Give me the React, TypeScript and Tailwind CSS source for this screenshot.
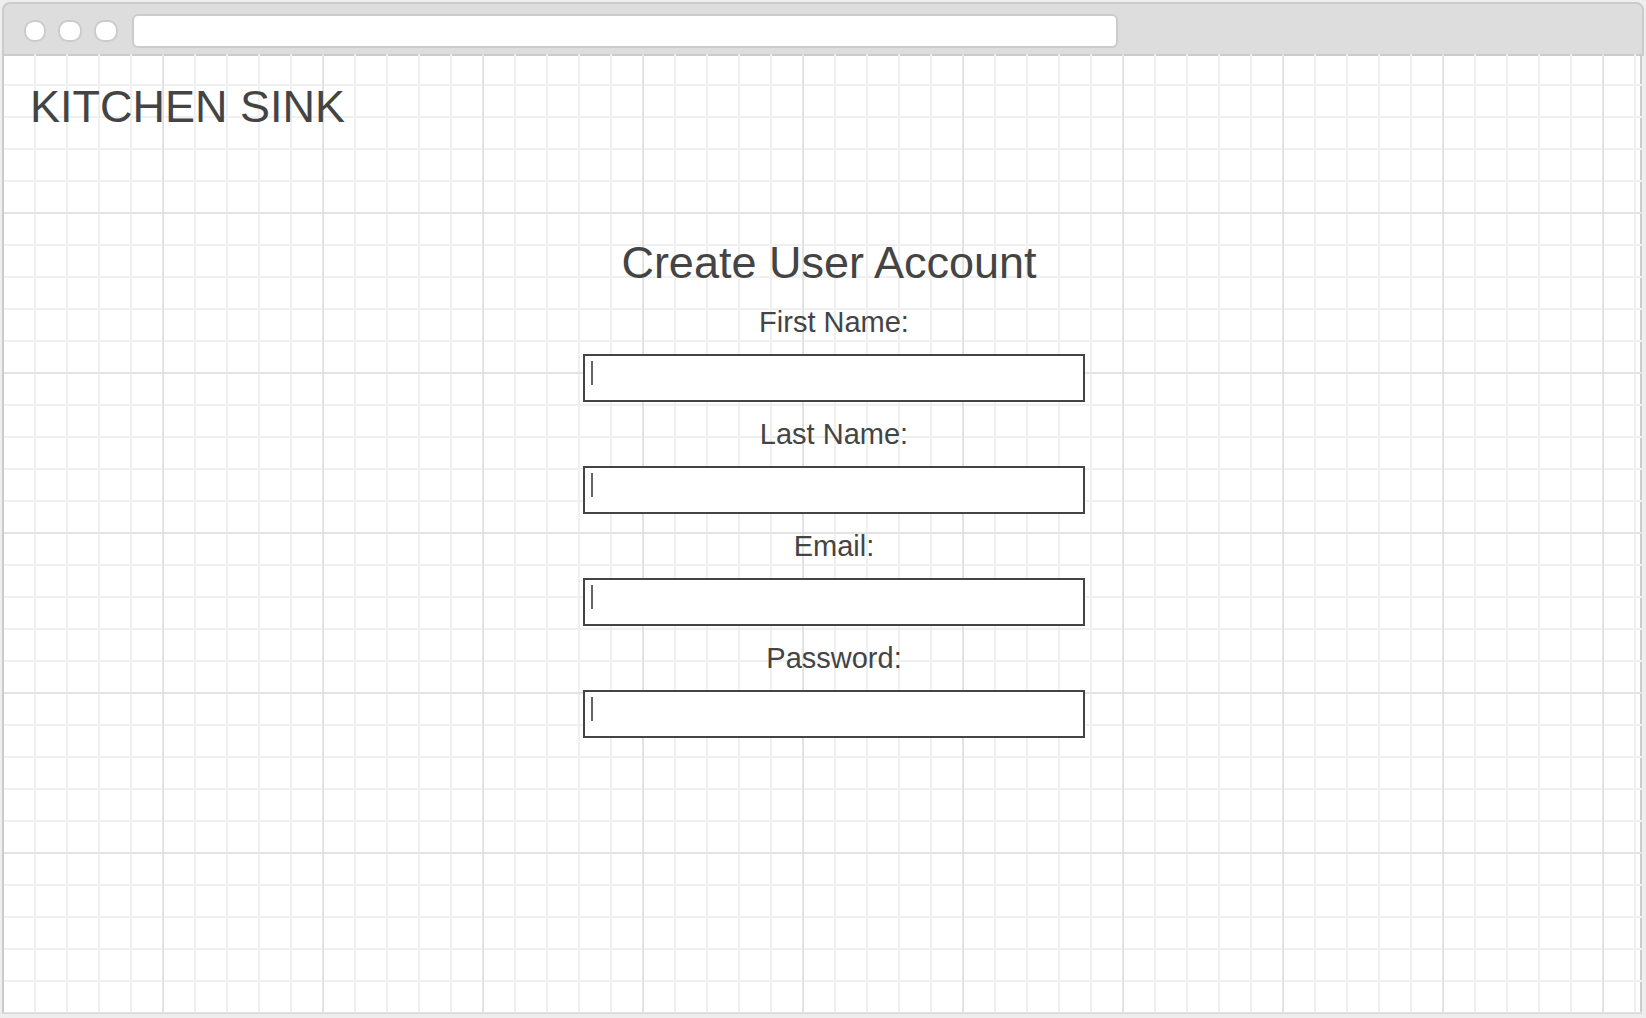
const fields = [
  { id: "first-name", label: "First Name:", type: "text" },
  { id: "last-name", label: "Last Name:", type: "text" },
  { id: "email", label: "Email:", type: "email" },
  { id: "password", label: "Password:", type: "password" },
];

function BrowserBar() {
  return (
    <header className="flex h-[54px] items-center rounded-t-lg border-2 border-[#cbcbcb] bg-[#ddd] pt-1 pr-3 pl-5">
      <div className="mr-[14px] flex gap-3">
        <button type="button" aria-label="Close" className="size-[22px] rounded-[10px] border-2 border-[#cbcbcb] bg-white" />
        <button type="button" aria-label="Minimize" className="h-[22px] w-6 rounded-[10px] border-2 border-[#cbcbcb] bg-white" />
        <button type="button" aria-label="Maximize" className="h-[22px] w-6 rounded-[10px] border-2 border-[#cbcbcb] bg-white" />
      </div>
      <input
        aria-label="Address"
        className="h-[34px] w-full max-w-[986px] rounded-md border-2 border-[#cbcbcb] bg-white px-2 outline-none"
      />
    </header>
  );
}

function GridPaper() {
  return (
    <div
      aria-hidden="true"
      className="pointer-events-none absolute -top-[2px] right-[-2px] bottom-[-1px] left-0 bg-[linear-gradient(to_right,transparent_158px,#e9e9e9_158px,#e0e0e0_159px),linear-gradient(to_bottom,transparent_158px,#e3e3e3_158px),linear-gradient(to_right,transparent_30px,#efefef_30px),linear-gradient(to_bottom,transparent_30px,#f0f0f0_30px)] bg-[size:160px_160px,160px_160px,32px_32px,32px_32px]"
    />
  );
}

function Field({ id, label, type }: { id: string; label: string; type: string }) {
  return (
    <div className="flex flex-col">
      <label htmlFor={id} className="pb-4 text-center text-[29px] leading-8">
        {label}
      </label>
      <div className="relative">
        <input
          id={id}
          type={type}
          className="block h-12 w-full border-2 border-[#444] bg-white px-2 text-xl outline-none"
        />
        <span className="pointer-events-none absolute top-[7px] left-2 h-6 w-[2px] bg-[#666]" />
      </div>
    </div>
  );
}

export default function App() {
  return (
    <div className="flex min-h-screen flex-col bg-[#eee] p-[2px] pb-1 font-['Liberation_Sans',sans-serif] text-[#444]">
      <BrowserBar />
      <main className="relative mr-[2px] flex-1 border-2 border-t-0 border-[#cbcbcb] border-b-[#d8d8d8] bg-white">
        <GridPaper />
        <div className="relative">
          <h1 className="pt-[25px] pl-[26px] text-[45px] leading-[52px]">KITCHEN SINK</h1>
          <form className="mt-[104px] flex flex-col items-center">
            <h2 className="pl-[14px] text-[45px] leading-[52px]">Create User Account</h2>
            <div className="mt-[17px] pl-6">
              <div className="flex w-[502px] flex-col gap-4">
                {fields.map((field) => (
                  <Field key={field.id} {...field} />
                ))}
              </div>
            </div>
          </form>
        </div>
      </main>
    </div>
  );
}
